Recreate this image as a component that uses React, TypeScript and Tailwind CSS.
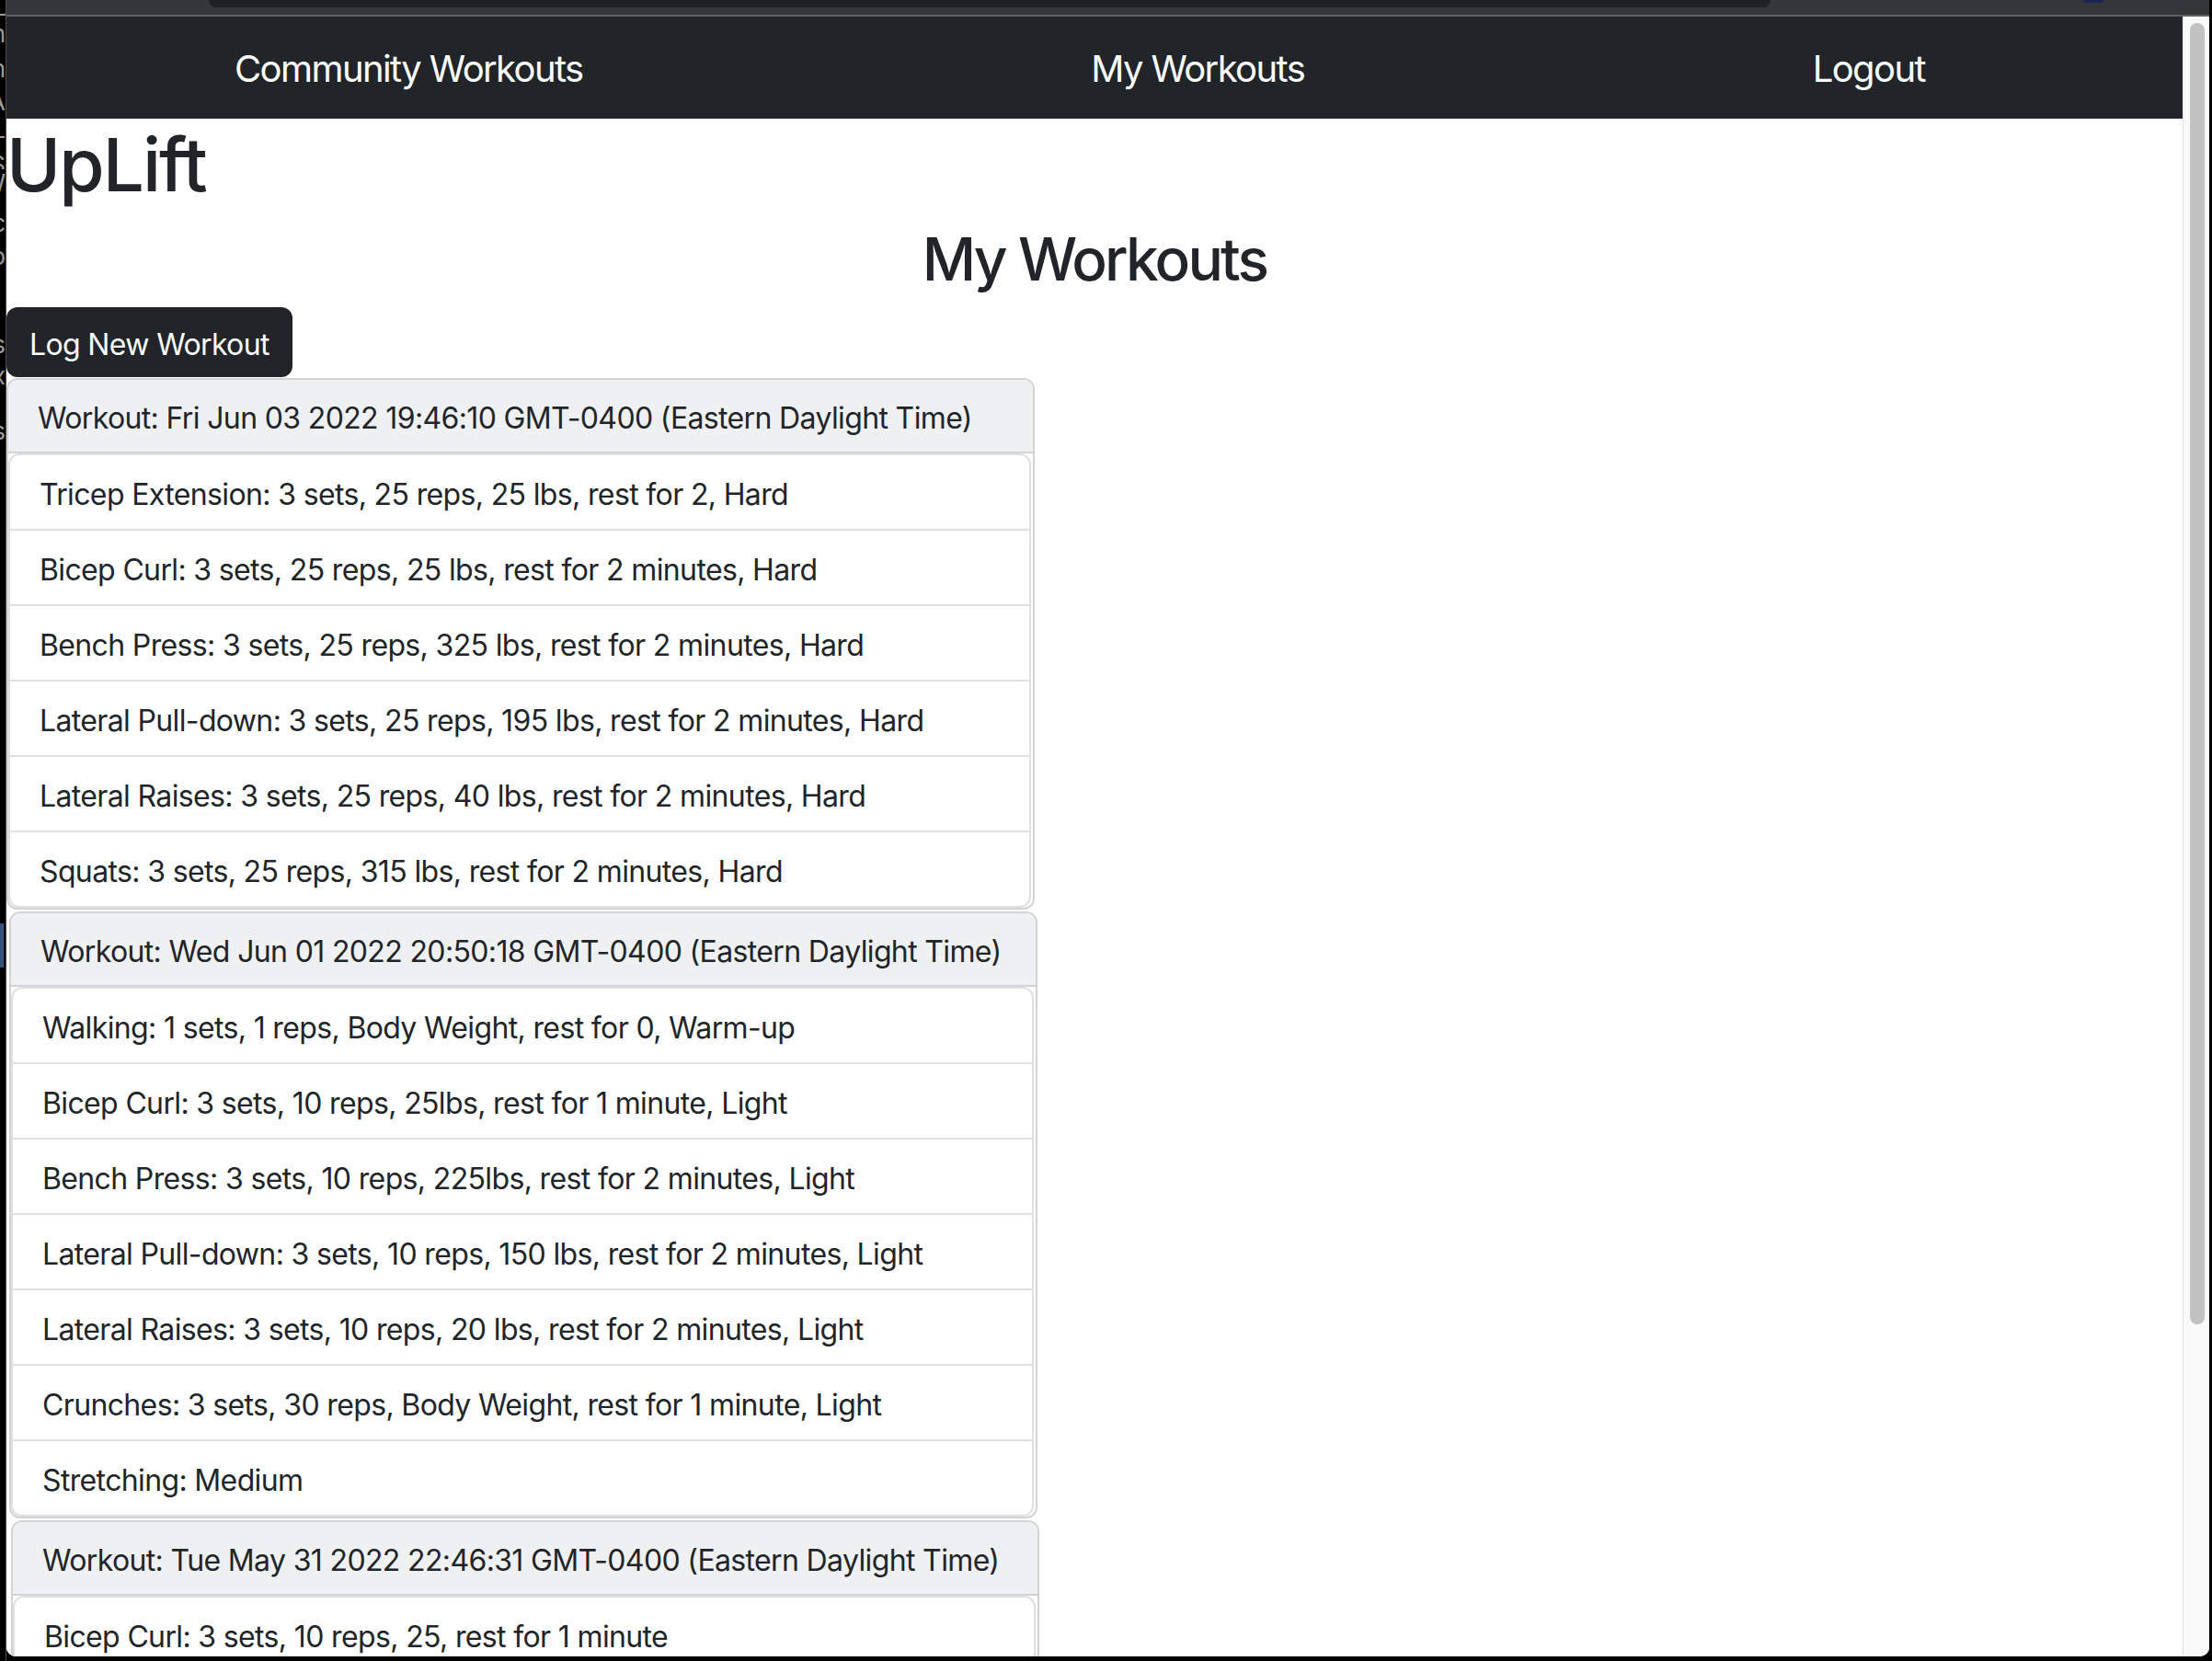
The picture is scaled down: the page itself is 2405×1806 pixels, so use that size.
import React from "react";

type Workout = {
  date: string;
  shift: string;
  exercises: string[];
};

const workouts: Workout[] = [
  {
    date: "Fri Jun 03 2022 19:46:10 GMT-0400 (Eastern Daylight Time)",
    shift: "ml-0",
    exercises: [
      "Tricep Extension: 3 sets, 25 reps, 25 lbs, rest for 2, Hard",
      "Bicep Curl: 3 sets, 25 reps, 25 lbs, rest for 2 minutes, Hard",
      "Bench Press: 3 sets, 25 reps, 325 lbs, rest for 2 minutes, Hard",
      "Lateral Pull-down: 3 sets, 25 reps, 195 lbs, rest for 2 minutes, Hard",
      "Lateral Raises: 3 sets, 25 reps, 40 lbs, rest for 2 minutes, Hard",
      "Squats: 3 sets, 25 reps, 315 lbs, rest for 2 minutes, Hard",
    ],
  },
  {
    date: "Wed Jun 01 2022 20:50:18 GMT-0400 (Eastern Daylight Time)",
    shift: "ml-[3px]",
    exercises: [
      "Walking: 1 sets, 1 reps, Body Weight, rest for 0, Warm-up",
      "Bicep Curl: 3 sets, 10 reps, 25lbs, rest for 1 minute, Light",
      "Bench Press: 3 sets, 10 reps, 225lbs, rest for 2 minutes, Light",
      "Lateral Pull-down: 3 sets, 10 reps, 150 lbs, rest for 2 minutes, Light",
      "Lateral Raises: 3 sets, 10 reps, 20 lbs, rest for 2 minutes, Light",
      "Crunches: 3 sets, 30 reps, Body Weight, rest for 1 minute, Light",
      "Stretching: Medium",
    ],
  },
  {
    date: "Tue May 31 2022 22:46:31 GMT-0400 (Eastern Daylight Time)",
    shift: "ml-[5px]",
    exercises: ["Bicep Curl: 3 sets, 10 reps, 25, rest for 1 minute"],
  },
];

// fragments of the window sitting behind the browser
const behind: { ch: string; h: string }[] = [
  { ch: "–", h: "h-[22px]" },
  { ch: "n", h: "h-[38px]" },
  { ch: "n", h: "h-[36px]" },
  { ch: "A", h: "h-[50px]" },
  { ch: "‾", h: "h-[18px]" },
  { ch: "S", h: "h-[20px]" },
  { ch: "W", h: "h-[44px]" },
  { ch: "c", h: "h-[36px]" },
  { ch: "o", h: "h-[96px]" },
  { ch: "s", h: "h-[34px]" },
  { ch: "x", h: "h-[60px]" },
  { ch: "s", h: "h-[30px]" },
];

function WorkoutCard({ workout }: { workout: Workout }) {
  return (
    <div
      className={`${workout.shift} mt-[2px] w-[1118px] rounded-[12px] border-2 border-[#d2d3d5] bg-white`}
    >
      <div className="whitespace-nowrap rounded-t-[10px] border-b-2 border-[#d2d3d5] bg-[#eff0f2] px-[32px] pb-[12px] pt-[18px] text-[32px] leading-[48px] tracking-[-0.02em] text-[#212529]">
        Workout: {workout.date}
      </div>
      <div className="mr-[2px] rounded-[12px] border-2 border-[#dfe0e2]">
        {workout.exercises.map((ex, i) => (
          <div
            key={i}
            className={`whitespace-nowrap px-[32px] pb-[13px] pt-[19px] text-[32px] leading-[48px] tracking-[-0.02em] text-[#212529] ${
              i > 0 ? "border-t-2 border-[#dfe0e2]" : ""
            }`}
          >
            {ex}
          </div>
        ))}
      </div>
    </div>
  );
}

export default function App() {
  return (
    <div className="flex h-[1806px] w-[2405px] overflow-hidden bg-black font-[Inter,'Noto_Sans',sans-serif]">
      {/* left strip: other window behind */}
      <div className="flex w-[7px] shrink-0 flex-col border-r border-[#4a4b4e] bg-black">
        {behind.map((b, i) => (
          <div
            key={i}
            className={`${b.h} flex shrink-0 justify-end overflow-hidden text-[26px] leading-[30px] text-[#9b9b9b]`}
          >
            <span className="whitespace-nowrap">{b.ch}</span>
          </div>
        ))}
        <div className="h-[520px] shrink-0" />
        <div className="h-[48px] w-[4px] shrink-0 bg-[#34557f]" />
      </div>

      {/* browser window */}
      <div className="flex h-[1801px] w-[2395px] shrink-0 flex-col overflow-hidden rounded-b-[10px] bg-white">
        {/* chrome strip */}
        <div className="flex h-[16px] shrink-0 bg-[#35363a]">
          <div className="ml-[220px] h-[8px] w-[1698px] rounded-b-[14px] bg-[#202124]" />
          <div className="ml-[340px] h-[3px] w-[22px] rounded-b-full bg-[#1b2656]" />
        </div>
        <div className="h-[2px] shrink-0 bg-[#5f6064]" />

        <div className="flex min-h-0 flex-1">
          {/* page */}
          <div className="min-w-0 flex-1 overflow-hidden bg-white text-[#212529]">
            <nav className="flex h-[111px] items-center justify-between bg-[#212529] pl-[248px] pr-[280px] pt-[3px] text-[40px] leading-[60px] tracking-[-0.04em] text-white">
              <span>Community Workouts</span>
              <span>My Workouts</span>
              <span>Logout</span>
            </nav>

            <h1 className="mb-[14px] pt-[2px] text-[80px] font-medium leading-[96px] tracking-[-0.025em]">
              UpLift
            </h1>
            <h2 className="mb-[14px] pt-[2px] text-center text-[64px] font-medium leading-[77px] tracking-[-0.044em]">
              My Workouts
            </h2>

            <button className="rounded-[12px] bg-[#212529] px-[25px] pb-[11px] pt-[17px] text-[32px] leading-[48px] tracking-[-0.02em] text-white">
              Log New Workout
            </button>

            <div className="-mt-[1px] flex flex-col">
              {workouts.map((w, i) => (
                <WorkoutCard key={i} workout={w} />
              ))}
            </div>
          </div>

          {/* scrollbar */}
          <div className="w-[29px] shrink-0 border-l border-[#e4e4e4] bg-[#f9f9f9] pl-[7px] pt-[7px]">
            <div className="h-[1415px] w-[16px] rounded-full bg-[#c1c1c1]" />
          </div>
        </div>
      </div>
    </div>
  );
}
